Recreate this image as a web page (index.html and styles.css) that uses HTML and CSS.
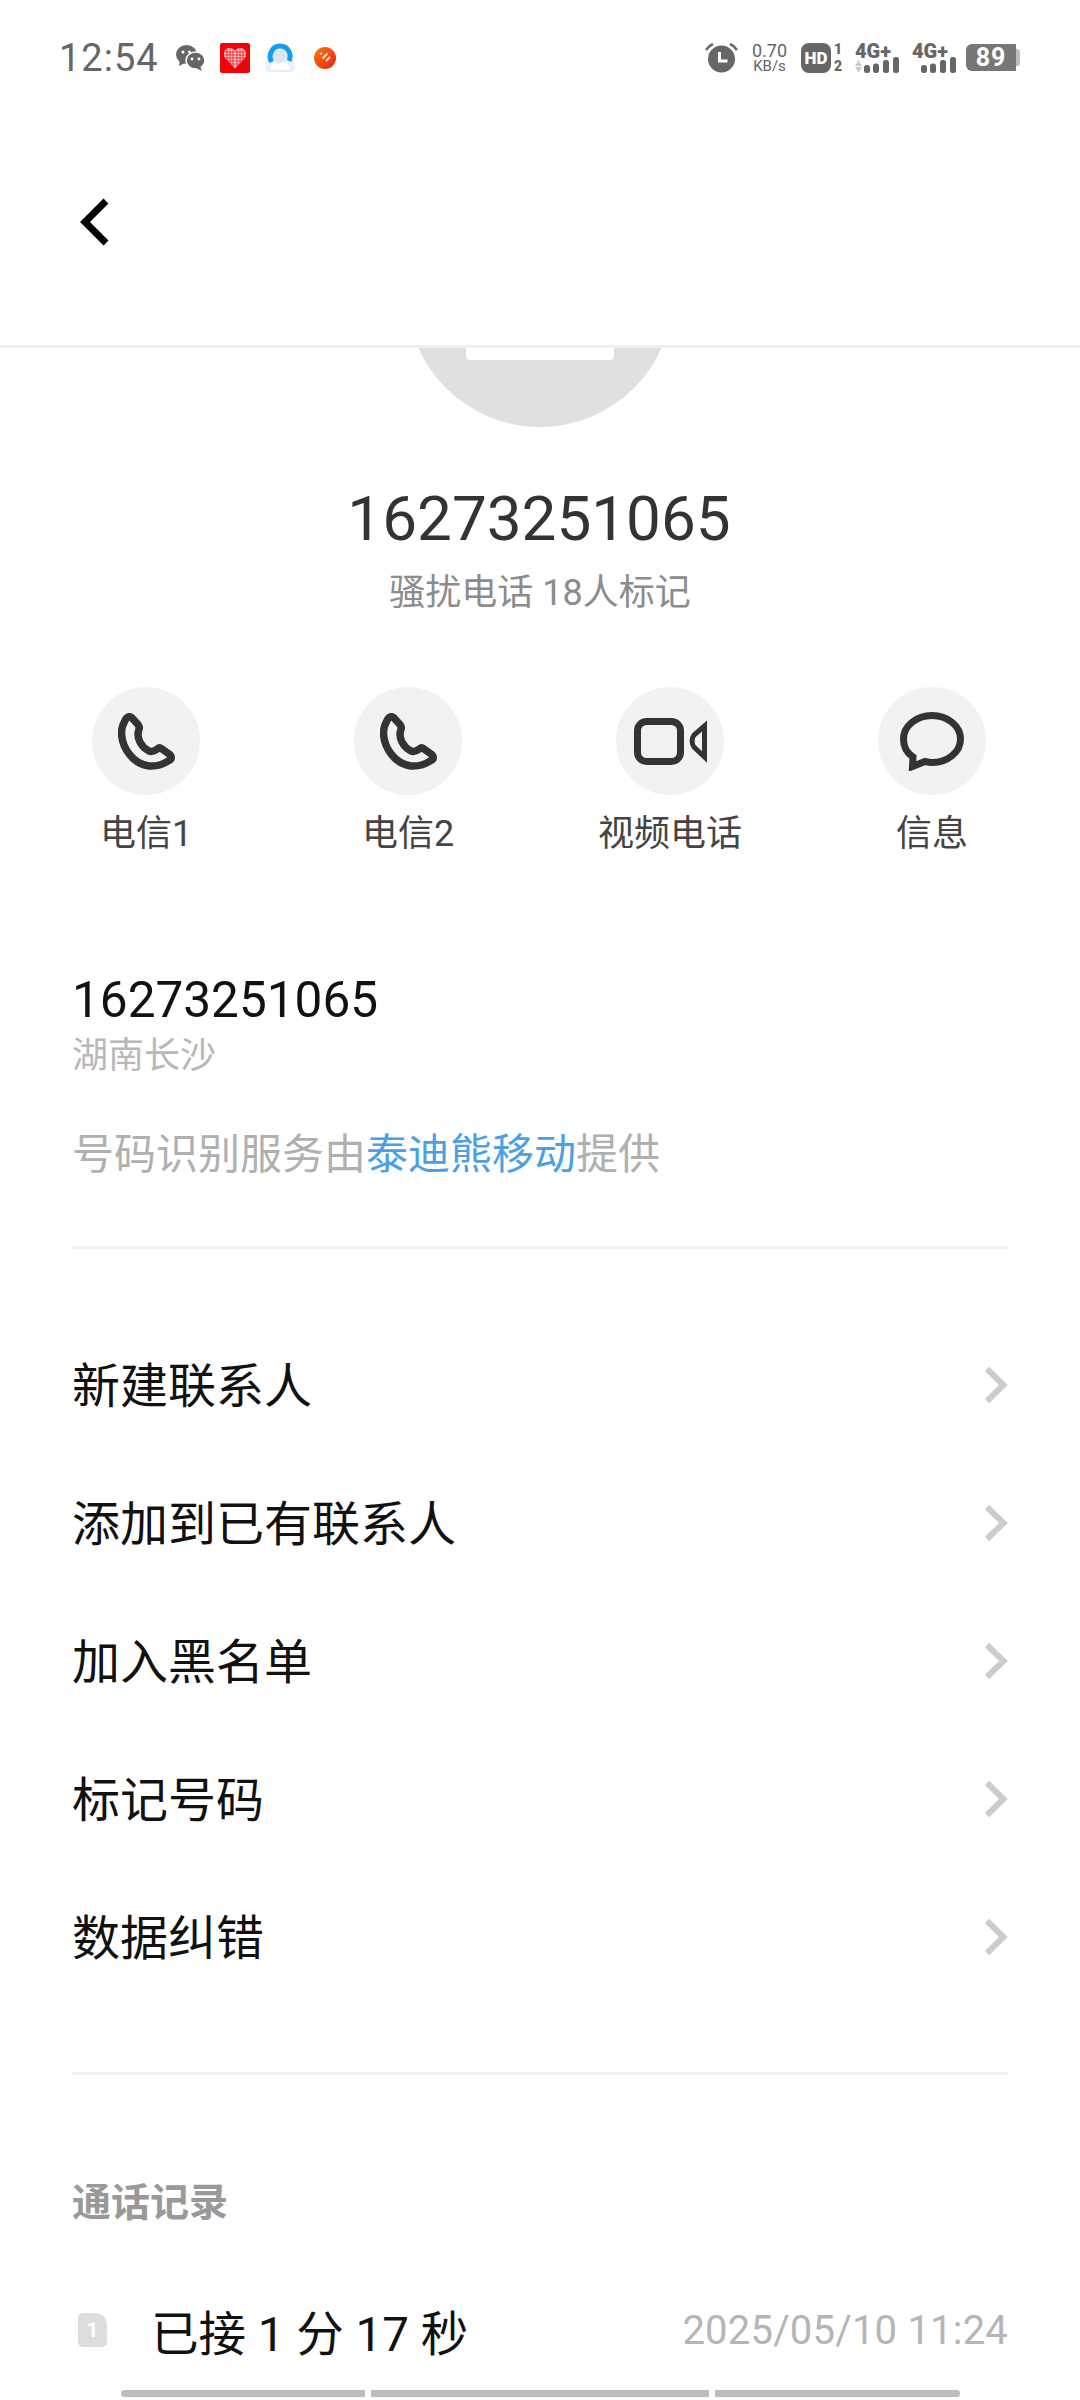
FILE: index.html
```html
<!DOCTYPE html>
<html lang="zh-CN">

<head>
    <meta charset="UTF-8">
    <meta name="viewport" content="width=device-width, initial-scale=1.0">
    <title>通话详情</title>
    <link rel="stylesheet" href="styles.css">
</head>

<body>
    <!-- 状态栏 -->
    <div class="statusBar">
        <span class="time">12:54</span>
        <div class="appIcons">
            <svg width="29" height="26" viewBox="0 0 29 26">
                <ellipse cx="10.500" cy="9.500" rx="10.500" ry="9.500" fill="#666"/>
                <path d="M4 15l-1 6 6-3z" fill="#666"/>
                <ellipse cx="19.500" cy="15.500" rx="9.500" ry="8.500" fill="#666" stroke="#fff" stroke-width="1.500"/>
                <path d="M24 21l2 5-6-3z" fill="#666"/>
                <circle cx="7" cy="7" r="1.500" fill="#fff"/><circle cx="13.500" cy="7" r="1.500" fill="#fff"/>
                <circle cx="16" cy="14" r="1.400" fill="#fff"/><circle cx="23" cy="14" r="1.400" fill="#fff"/>
            </svg>
            <svg width="30" height="30" viewBox="0 0 30 30">
                <rect width="30" height="30" rx="2" fill="#f60008"/>
                <path d="M15 25.500L5 15C2 9 6 4.500 10 5c2.500.3 4 1.500 5 3 1-1.500 2.500-2.700 5-3 4-.5 8 4 5 10z" fill="#fbdcdc"/>
                <path d="M7 6v12M10 5v16M13 7v17M17 7v17M20 5v16M23 6v12M4 9h22M3 12h24M4 15h22M7 18h16M10 21h10" stroke="#f60008" stroke-width=".8" fill="none"/>
            </svg>
            <svg width="30" height="29" viewBox="0 0 30 29">
                <defs>
                    <linearGradient id="qqBg" x1="0" y1="0" x2="0" y2="1">
                        <stop offset="0" stop-color="#fff"/>
                        <stop offset="1" stop-color="#e3effb"/>
                    </linearGradient>
                </defs>
                <rect width="30" height="29" rx="5" fill="url(#qqBg)"/>
                <circle cx="15" cy="13" r="7" fill="#dfe4ee"/>
                <path d="M6.500 19C3 12 7 3 15 3s12 8 9 15" fill="none" stroke="#129cf2" stroke-width="5"/>
                <path d="M7 27c-3-4 1-8 6-6 2-3 8-2 9 1 3 0 4 3 2 5z" fill="#fff"/>
            </svg>
            <svg class="orangeIcon" width="22" height="22" viewBox="0 0 22 22">
                <defs>
                    <linearGradient id="orangeBg" x1="0" y1="0" x2="1" y2="1">
                        <stop offset="0" stop-color="#f77a0c"/>
                        <stop offset="1" stop-color="#e9231a"/>
                    </linearGradient>
                </defs>
                <circle cx="11" cy="11" r="11" fill="url(#orangeBg)"/>
                <path d="M6 7.500l2-1.500M8.500 11.500L13.500 6.500M12 14l4-4" stroke="#fde3c8" stroke-width="2" fill="none"/>
            </svg>
        </div>
        <div class="sysIcons">
            <svg class="alarm" width="33" height="30" viewBox="0 0 33 30">
                <circle cx="16.500" cy="16" r="13.500" fill="#666"/>
                <path d="M14.500 9v9h8" stroke="#fff" stroke-width="3" fill="none"/>
                <path d="M1 7c2-3 4-5 7-6M32 7c-2-3-4-5-7-6" stroke="#666" stroke-width="2.500" fill="none"/>
            </svg>
            <div class="speed"><span>0.70</span><span class="unit">KB/s</span></div>
            <div class="hd"><span class="hdBox">HD</span><span class="hdNums"><b>1</b><b>2</b></span></div>
            <div class="signal">
                <span class="netType">4G+</span>
                <svg width="44" height="16" viewBox="0 0 44 16">
                    <path d="M0 9l3.500-6L7 9zM0 10h7l-3.500 6z" fill="#ccc"/>
                    <rect x="9" y="8" width="6" height="8" rx="2.500" fill="#666"/>
                    <rect x="18" y="6.500" width="6" height="9.500" rx="2.500" fill="#666"/>
                    <rect x="28" y="3" width="6" height="13" rx="2.500" fill="#666"/>
                    <rect x="38" y="0" width="6" height="16" rx="2.500" fill="#666"/>
                </svg>
            </div>
            <div class="signal">
                <span class="netType">4G+</span>
                <svg width="44" height="16" viewBox="0 0 44 16">
                    <rect x="9" y="8" width="6" height="8" rx="2.500" fill="#666"/>
                    <rect x="18" y="6.500" width="6" height="9.500" rx="2.500" fill="#666"/>
                    <rect x="28" y="3" width="6" height="13" rx="2.500" fill="#666"/>
                    <rect x="38" y="0" width="6" height="16" rx="2.500" fill="#666"/>
                </svg>
            </div>
            <div class="battery"><span class="batteryBody">89</span><span class="batteryCap"></span></div>
        </div>
    </div>

    <!-- 标题栏 -->
    <div class="titleBar">
        <svg width="34" height="48" viewBox="0 0 34 48">
            <path d="M28 3L7 24l21 21" fill="none" stroke="#000" stroke-width="7"/>
        </svg>
    </div>

    <div class="content">
        <div class="avatar"><span class="avatarCut"></span></div>
        <div class="callerNum">16273251065</div>
        <div class="callerTag">骚扰电话 18人标记</div>

        <ul class="actions">
            <li>
                <span class="actionIcon">
                    <svg width="57" height="57" viewBox="0 0 57 57">
                        <path class="phone" d="M7 7.500C9 3 12 3 14 5l5.500 6c2.500 3 2 4 1 7-2 7 2.500 16 10.500 20 4 1.500 7-1 9-2.500 1-1 2-1 4 .5l7 5c3 2.500 3 5 0 6.500-6 4-13 6-20 5.500C15 51 4 35 3.500 20c0-5 1.500-9 3.500-12.500z"/>
                    </svg>
                </span>
                <span class="actionLabel">电信1</span>
            </li>
            <li>
                <span class="actionIcon">
                    <svg width="57" height="57" viewBox="0 0 57 57">
                        <path class="phone" d="M7 7.500C9 3 12 3 14 5l5.500 6c2.500 3 2 4 1 7-2 7 2.500 16 10.500 20 4 1.500 7-1 9-2.500 1-1 2-1 4 .5l7 5c3 2.500 3 5 0 6.500-6 4-13 6-20 5.500C15 51 4 35 3.500 20c0-5 1.500-9 3.500-12.500z"/>
                    </svg>
                </span>
                <span class="actionLabel">电信2</span>
            </li>
            <li>
                <span class="actionIcon">
                    <svg width="73" height="47" viewBox="0 0 73 47">
                        <rect x="3.500" y="3.500" width="43" height="40" rx="9" fill="none" stroke="#333" stroke-width="7"/>
                        <path d="M70.500 8v31L60 29c-2.500-3-2.500-9 0-12z" fill="none" stroke="#333" stroke-width="5"/>
                    </svg>
                </span>
                <span class="actionLabel">视频电话</span>
            </li>
            <li>
                <span class="actionIcon">
                    <svg width="64" height="59" viewBox="0 0 64 59">
                        <path d="M32 3.500c15.700 0 28.500 10.500 28.500 23.500S47.700 50.500 32 50.500c-3 0-5-.5-7-1l-12.500 5 .5-9.500C7 41 3.500 34 3.500 27 3.500 14 16.300 3.500 32 3.500z" fill="none" stroke="#333" stroke-width="7"/>
                    </svg>
                </span>
                <span class="actionLabel">信息</span>
            </li>
        </ul>

        <div class="numInfo">
            <div class="numMain">16273251065</div>
            <div class="numCity">湖南长沙</div>
            <div class="numSource">号码识别服务由<a class="numLink">泰迪熊移动</a>提供</div>
        </div>

        <ul class="menu">
            <li>新建联系人<svg class="arrow" width="24" height="38" viewBox="0 0 24 38"><path d="M3 3l16.500 16L3 35"/></svg></li>
            <li>添加到已有联系人<svg class="arrow" width="24" height="38" viewBox="0 0 24 38"><path d="M3 3l16.500 16L3 35"/></svg></li>
            <li>加入黑名单<svg class="arrow" width="24" height="38" viewBox="0 0 24 38"><path d="M3 3l16.500 16L3 35"/></svg></li>
            <li>标记号码<svg class="arrow" width="24" height="38" viewBox="0 0 24 38"><path d="M3 3l16.500 16L3 35"/></svg></li>
            <li>数据纠错<svg class="arrow" width="24" height="38" viewBox="0 0 24 38"><path d="M3 3l16.500 16L3 35"/></svg></li>
        </ul>

        <div class="logs">
            <div class="logsTitle">通话记录</div>
            <div class="logRow">
                <span class="simIcon">1</span>
                <span class="logText">已接 1 分 17 秒</span>
                <span class="logTime">2025/05/10 11:24</span>
            </div>
        </div>
    </div>

    <!-- 底部滚动条 -->
    <div class="scrollBars">
        <span class="bar1"></span>
        <span class="bar2"></span>
        <span class="bar3"></span>
    </div>
</body>

</html>
```

FILE: styles.css
```css
* {
    padding: 0;
    margin: 0;
    list-style: none;
    box-sizing: border-box;
}

html,
body {
    width: 1080px;
    height: 2400px;
    overflow: hidden;
    background-color: #fff;
}

body {
    position: relative;
    font-family: Roboto, "Noto Sans CJK SC", sans-serif;
}

/* 状态栏 */
.statusBar {
    display: flex;
    align-items: center;
    height: 115px;
    padding-left: 59px;
    color: #666;
}

.time {
    width: 117px;
    font-size: 38px;
    letter-spacing: 1px;
}

.appIcons {
    display: flex;
    align-items: center;
    gap: 15px;
}

.orangeIcon {
    margin-left: 4px;
}

.sysIcons {
    display: flex;
    align-items: center;
    margin-left: auto;
    padding-right: 60px;
}

.alarm {
    margin-right: 14px;
}

.speed {
    display: flex;
    flex-direction: column;
    align-items: center;
    width: 35px;
    font-size: 18px;
    line-height: 17px;
}

.speed .unit {
    font-size: 15px;
    line-height: 15px;
}

.hd {
    display: flex;
    align-items: center;
    margin-left: 14px;
}

.hdBox {
    width: 30px;
    height: 30px;
    border-radius: 8px;
    background-color: #666;
    color: #fff;
    font-size: 17px;
    font-weight: 900;
    line-height: 30px;
    text-align: center;
}

.hdNums {
    display: flex;
    flex-direction: column;
    align-items: center;
    width: 10px;
    margin-left: 2px;
}

.hdNums b {
    font-size: 14px;
    font-weight: 900;
    line-height: 17px;
}

.signal {
    display: flex;
    flex-direction: column;
    width: 44px;
    margin-left: 12px;
}

.signal+.signal {
    margin-left: 13px;
}

.netType {
    margin-bottom: -2px;
    font-size: 20px;
    font-weight: 900;
    line-height: 16px;
}

.battery {
    display: flex;
    align-items: center;
    margin-left: 10px;
}

.batteryBody {
    width: 50px;
    height: 27px;
    border-radius: 6px 0 0 6px;
    background-color: #777;
    color: #fff;
    font-size: 25px;
    font-weight: 700;
    letter-spacing: 1px;
    line-height: 27px;
    text-align: center;
}

.batteryCap {
    width: 4px;
    height: 17px;
    border-radius: 0 3px 3px 0;
    background-color: #bbb;
}

/* 标题栏 */
.titleBar {
    position: relative;
    z-index: 1;
    display: flex;
    align-items: center;
    height: 233px;
    padding: 0 0 16px 78px;
    background-color: #fff;
    border-bottom: 3px solid #f0f0f0;
}

.content {
    display: flex;
    flex-direction: column;
}

.avatar {
    position: relative;
    width: 266px;
    height: 266px;
    margin: -187px auto 0;
    border-radius: 50%;
    background-color: #e0e0e0;
}

.avatarCut {
    position: absolute;
    left: 59px;
    top: 133px;
    width: 148px;
    height: 66px;
    border-radius: 4px;
    background-color: #fff;
}

.callerNum {
    margin-top: 57px;
    padding-right: 2px;
    color: #333;
    font-size: 62px;
    line-height: 70px;
    text-align: center;
}

.callerTag {
    margin-top: 17px;
    color: #8c8c8c;
    font-size: 36px;
    line-height: 44px;
    text-align: center;
}

.actions {
    display: grid;
    grid-template-columns: repeat(4, 262px);
    margin-top: 72px;
    padding-left: 15px;
}

.actions li {
    display: flex;
    flex-direction: column;
    align-items: center;
}

.actionIcon {
    display: flex;
    align-items: center;
    justify-content: center;
    width: 108px;
    height: 108px;
    border-radius: 50%;
    background-color: #f2f2f2;
}

.actionLabel {
    margin-top: 14px;
    color: #444;
    font-size: 36px;
    line-height: 50px;
}

.phone {
    fill: none;
    stroke: #333;
    stroke-width: 7.5;
    stroke-linejoin: round;
}

.numInfo {
    margin: 111px 72px 0;
    padding-bottom: 64px;
    border-bottom: 3px solid #f2f2f2;
}

.numMain {
    color: #111;
    font-size: 49.5px;
    line-height: 60px;
}

.numCity {
    margin-top: 4px;
    color: #b8b8b8;
    font-size: 36px;
    line-height: 44px;
}

.numSource {
    margin-top: 50px;
    color: #b0b0b0;
    font-size: 42px;
    line-height: 54px;
}

.numLink {
    color: #4a9fe5;
}

.menu {
    margin: 64px 72px 0;
    padding-bottom: 69px;
    border-bottom: 3px solid #f2f2f2;
}

.menu li {
    display: flex;
    align-items: center;
    justify-content: space-between;
    height: 138px;
    color: #111;
    font-size: 48px;
}

.arrow {
    margin-top: 6px;
    fill: none;
    stroke: #ccc;
    stroke-width: 6;
}

.logs {
    margin: 0 72px;
}

.logsTitle {
    margin-top: 100px;
    color: #999;
    font-size: 39px;
    font-weight: 700;
    line-height: 56px;
}

.logRow {
    display: flex;
    align-items: center;
    height: 60px;
    margin-top: 69px;
}

.simIcon {
    width: 29px;
    height: 34px;
    margin-left: 6px;
    border-radius: 5px 12px 5px 5px;
    background-color: #ddd;
    color: #fff;
    font-size: 20px;
    font-weight: 700;
    line-height: 34px;
    text-align: center;
}

.logText {
    margin-left: 44px;
    color: #111;
    font-size: 47.5px;
}

.logTime {
    margin-left: auto;
    color: #b5b5b5;
    font-size: 40px;
    letter-spacing: .2px;
}

.scrollBars {
    position: absolute;
    left: 121px;
    bottom: 3px;
    display: flex;
    gap: 6px;
    height: 7px;
}

.scrollBars span {
    background-color: #bdbdbd;
}

.bar1 {
    width: 244px;
    border-radius: 4px 0 0 4px;
}

.bar2 {
    width: 338px;
}

.bar3 {
    width: 245px;
    border-radius: 0 4px 4px 0;
}
```
